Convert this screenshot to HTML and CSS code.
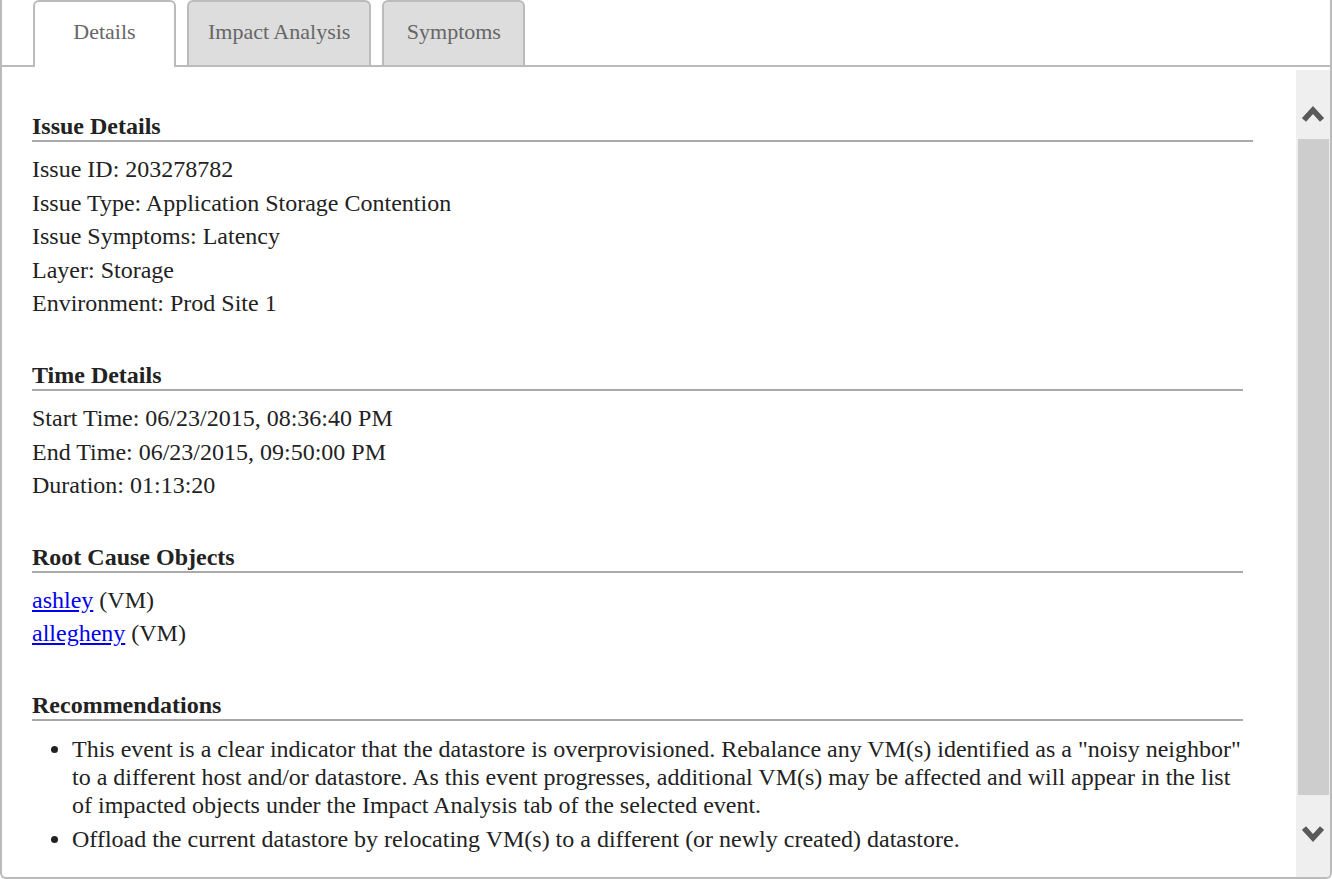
FILE: index.html
```html
<!DOCTYPE html>
<html>
<head>
<meta charset="utf-8">
<title>Issue Details</title>
<link rel="stylesheet" href="styles.css">
</head>
<body>
<div class="frame">
  <div class="tabbar">
    <div class="tab tab--active">Details</div>
    <div class="tab">Impact Analysis</div>
    <div class="tab">Symptoms</div>
  </div>
  <div class="panel">
    <div class="content">
      <section class="section section--wide">
        <h3 class="section-title">Issue Details</h3>
        <div class="rows">
          <div class="row">Issue ID: 203278782</div>
          <div class="row">Issue Type: Application Storage Contention</div>
          <div class="row">Issue Symptoms: Latency</div>
          <div class="row">Layer: Storage</div>
          <div class="row">Environment: Prod Site 1</div>
        </div>
      </section>
      <section class="section">
        <h3 class="section-title">Time Details</h3>
        <div class="rows">
          <div class="row">Start Time: 06/23/2015, 08:36:40 PM</div>
          <div class="row">End Time: 06/23/2015, 09:50:00 PM</div>
          <div class="row">Duration: 01:13:20</div>
        </div>
      </section>
      <section class="section">
        <h3 class="section-title">Root Cause Objects</h3>
        <div class="rows">
          <div class="row"><a class="link" href="#">ashley</a> (VM)</div>
          <div class="row"><a class="link" href="#">allegheny</a> (VM)</div>
        </div>
      </section>
      <section class="section">
        <h3 class="section-title">Recommendations</h3>
        <ul class="recs">
          <li class="rec">This event is a clear indicator that the datastore is overprovisioned. Rebalance any VM(s) identified as a "noisy neighbor" to a different host and/or datastore. As this event progresses, additional VM(s) may be affected and will appear in the list of impacted objects under the Impact Analysis tab of the selected event.</li>
          <li class="rec">Offload the current datastore by relocating VM(s) to a different (or newly created) datastore.</li>
        </ul>
      </section>
    </div>
    <div class="scrollbar">
      <div class="sb-btn sb-btn--up">
        <svg class="chev" width="22" height="18" viewBox="0 0 22 18"><polyline points="2,16 11,6 20,16" fill="none" stroke="#5a5a5a" stroke-width="5.5" stroke-linejoin="miter"/></svg>
      </div>
      <div class="sb-thumb"></div>
      <div class="sb-btn sb-btn--down">
        <svg class="chev" width="22" height="18" viewBox="0 0 22 18"><polyline points="2,2 11,12 20,2" fill="none" stroke="#5a5a5a" stroke-width="5.5" stroke-linejoin="miter"/></svg>
      </div>
    </div>
  </div>
</div>
</body>
</html>
```
FILE: styles.css
```css
html, body {
  margin: 0;
  padding: 0;
  background: #ffffff;
}
body {
  font-family: "Liberation Serif", "Times New Roman", serif;
  color: #222222;
}
.frame {
  box-sizing: border-box;
  width: 1332px;
  height: 879px;
  border: 2px solid #bbbbbb;
  border-top: none;
  border-radius: 0 0 6px 6px;
  display: flex;
  flex-direction: column;
  overflow: hidden;
}
.tabbar {
  box-sizing: border-box;
  height: 67px;
  flex: none;
  display: flex;
  align-items: flex-start;
  gap: 11px;
  padding-left: 31px;
  border-bottom: 2px solid #bbbbbb;
}
.tab {
  box-sizing: border-box;
  height: 65px;
  min-width: 143px;
  padding: 0 19px 3px;
  display: flex;
  align-items: center;
  justify-content: center;
  font-size: 22px;
  color: #666666;
  background: #dddddd;
  border: 2px solid #bbbbbb;
  border-bottom: none;
  border-radius: 6px 6px 0 0;
}
.tab--active {
  background: #ffffff;
  height: 67px;
  padding-bottom: 5px;
  position: relative;
  z-index: 1;
}
.panel {
  flex: 1;
  min-height: 0;
  display: flex;
}
.content {
  flex: 1;
  min-width: 0;
  overflow: hidden;
  padding: 45px 0 0 30px;
}
.section {
  margin-right: 53px;
  margin-top: 40px;
}
.section--wide {
  margin-right: 43px;
  margin-top: 0;
}
.section-title {
  margin: 0;
  font-size: 24px;
  font-weight: bold;
  line-height: 28px;
  border-bottom: 2px solid #aaaaaa;
}
.rows {
  margin-top: 11px;
}
.row {
  font-size: 24px;
  line-height: 33.6px;
}
.link {
  color: #0000ee;
  text-decoration: underline;
}
.recs {
  margin: 12px 0 0 0;
  padding-left: 40px;
  font-size: 24px;
  line-height: 27.6px;
}
.rec {
  padding: 3.5px 0;
}
.scrollbar {
  width: 34px;
  flex: none;
  margin-top: 3px;
  background: #efefef;
  display: flex;
  flex-direction: column;
}
.sb-btn {
  display: flex;
  justify-content: center;
}
.sb-btn--up {
  height: 69px;
  box-sizing: border-box;
  padding-top: 34px;
}
.sb-thumb {
  height: 656px;
  margin: 0 1px 0 2px;
  background: #cdcdcd;
}
.sb-btn--down {
  flex: 1;
  padding-top: 31px;
}
.chev {
  display: block;
}
```
